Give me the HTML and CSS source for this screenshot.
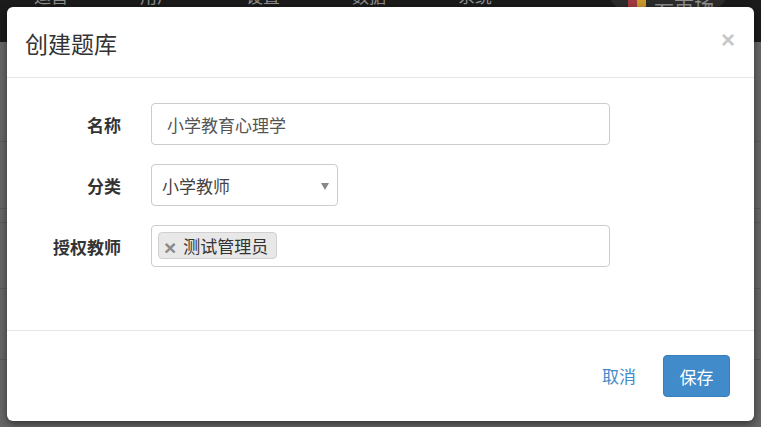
FILE: index.html
```html
<!DOCTYPE html>
<html lang="zh">
<head>
<meta charset="utf-8">
<title>创建题库</title>
<link rel="stylesheet" href="styles.css">
</head>
<body>
<div class="navbar">
  <span class="nav-item">运营</span>
  <span class="nav-item">用户</span>
  <span class="nav-item">设置</span>
  <span class="nav-item">数据</span>
  <span class="nav-item">系统</span>
  <span class="nav-pill"><i class="sq red"></i><i class="sq yellow"></i><span class="pill-text">云市场</span></span>
</div>
<div class="page">
  <div class="row r1"></div>
  <div class="row r2"></div>
  <div class="row r3"></div>
  <div class="row r4"></div>
  <div class="row r5"></div>
</div>

<div class="modal">
  <div class="modal-header">
    <h4 class="modal-title">创建题库</h4>
    <span class="close">×</span>
  </div>
  <div class="modal-body">
    <div class="form-row">
      <label class="form-label">名称</label>
      <div class="input wide">小学教育心理学</div>
    </div>
    <div class="form-row">
      <label class="form-label">分类</label>
      <div class="input select"><span>小学教师</span><i class="arrow"></i></div>
    </div>
    <div class="form-row">
      <label class="form-label">授权教师</label>
      <div class="input wide tags"><span class="tag"><span class="tag-x">×</span>测试管理员</span></div>
    </div>
  </div>
  <div class="modal-footer">
    <span class="btn-link">取消</span>
    <span class="btn-primary">保存</span>
  </div>
</div>
</body>
</html>
```

FILE: styles.css
```css
* { box-sizing: border-box; }
html, body { margin: 0; padding: 0; }
body {
  width: 761px;
  height: 427px;
  overflow: hidden;
  background: #676767;
  font-family: "Noto Sans CJK SC", "Noto Sans", sans-serif;
  position: relative;
}
.navbar {
  height: 42px;
  background: #1b1b1b;
  display: flex;
  align-items: flex-start;
  padding-left: 34px;
  position: relative;
}
.nav-item {
  color: #8f8f8f;
  font-size: 17px;
  line-height: 17px;
  margin-top: -13px;
  width: 106px;
}
.nav-pill {
  position: absolute;
  left: 608px;
  top: -30px;
  width: 120px;
  height: 40px;
  border-radius: 20px;
  background: #2c2c2c;
  display: flex;
  align-items: flex-end;
  padding: 0 0 6px 20px;
}
.sq { display: block; width: 9px; height: 14px; margin-bottom: -4px; }
.sq.red { background: #a13a3f; border-radius: 2px 0 0 2px; }
.sq.yellow { background: #c99a2c; border-radius: 0 2px 2px 0; }
.pill-text { color: #8f8f8f; font-size: 20px; line-height: 20px; margin-left: 8px; margin-bottom: -12px; }
.page { display: flex; flex-direction: column; }
.row { border-bottom: 1px solid #5b5b5b; }
.r1 { height: 100px; }
.r2 { height: 67px; }
.r3 { height: 14px; }
.r4 { height: 66px; }
.r5 { height: 71px; }

.modal {
  position: absolute;
  left: 7px;
  top: 7px;
  width: 747px;
  height: 414px;
  background: #fff;
  border-radius: 6px;
  box-shadow: 0 3px 9px rgba(0,0,0,.5);
  display: flex;
  flex-direction: column;
}
.modal-header {
  height: 71px;
  border-bottom: 1px solid #e5e5e5;
  display: flex;
  align-items: center;
  justify-content: space-between;
  padding: 0 19px 0 18px;
}
.modal-title {
  margin: 0;
  font-size: 23px;
  font-weight: normal;
  color: #333;
  line-height: 30px;
  margin-top: 2px;
}
.close {
  font-family: "Liberation Sans", Arial, sans-serif;
  font-size: 24px;
  font-weight: bold;
  color: #c8c8c8;
  line-height: 24px;
  margin-top: -4px;
}
.modal-body {
  height: 253px;
  border-bottom: 1px solid #e5e5e5;
  padding-top: 25px;
  display: flex;
  flex-direction: column;
  gap: 19px;
}
.form-row {
  display: grid;
  grid-template-columns: 114px auto;
  column-gap: 30px;
  align-items: center;
}
.form-label {
  text-align: right;
  font-size: 17px;
  font-weight: bold;
  color: #333;
}
.input {
  height: 42px;
  border: 1px solid #ccc;
  border-radius: 4px;
  font-size: 17px;
  color: #555;
  display: flex;
  align-items: center;
}
.wide { width: 459px; padding-left: 15px; }
.select {
  width: 187px;
  padding: 0 8px 0 10px;
  justify-content: space-between;
  color: #444;
}
.arrow {
  width: 0; height: 0;
  border-left: 4px solid transparent;
  border-right: 4px solid transparent;
  border-top: 7px solid #888;
  margin-top: 2px;
}
.tags { padding-left: 6px; align-items: flex-start; padding-top: 6px; }
.tag {
  display: flex;
  align-items: center;
  height: 27px;
  background: #e8e8e8;
  border: 1px solid #d0d0d0;
  border-radius: 4px;
  padding: 0 8px 0 5px;
  color: #333;
  font-size: 17px;
}
.tag-x {
  font-family: "Liberation Sans", Arial, sans-serif;
  font-weight: bold;
  color: #8a8a8a;
  font-size: 21px;
  line-height: 20px;
  margin-right: 7px;
  margin-top: 4px;
}
.modal-footer {
  flex: 1;
  display: flex;
  justify-content: flex-end;
  align-items: flex-start;
  padding: 24px 24px 0 0;
  gap: 27px;
}
.btn-link {
  color: #428bca;
  font-size: 17px;
  line-height: 42px;
}
.btn-primary {
  width: 67px;
  height: 42px;
  background: #428bca;
  border: 1px solid #357ebd;
  border-radius: 4px;
  color: #fff;
  font-size: 17px;
  display: flex;
  align-items: center;
  justify-content: center;
}
```
